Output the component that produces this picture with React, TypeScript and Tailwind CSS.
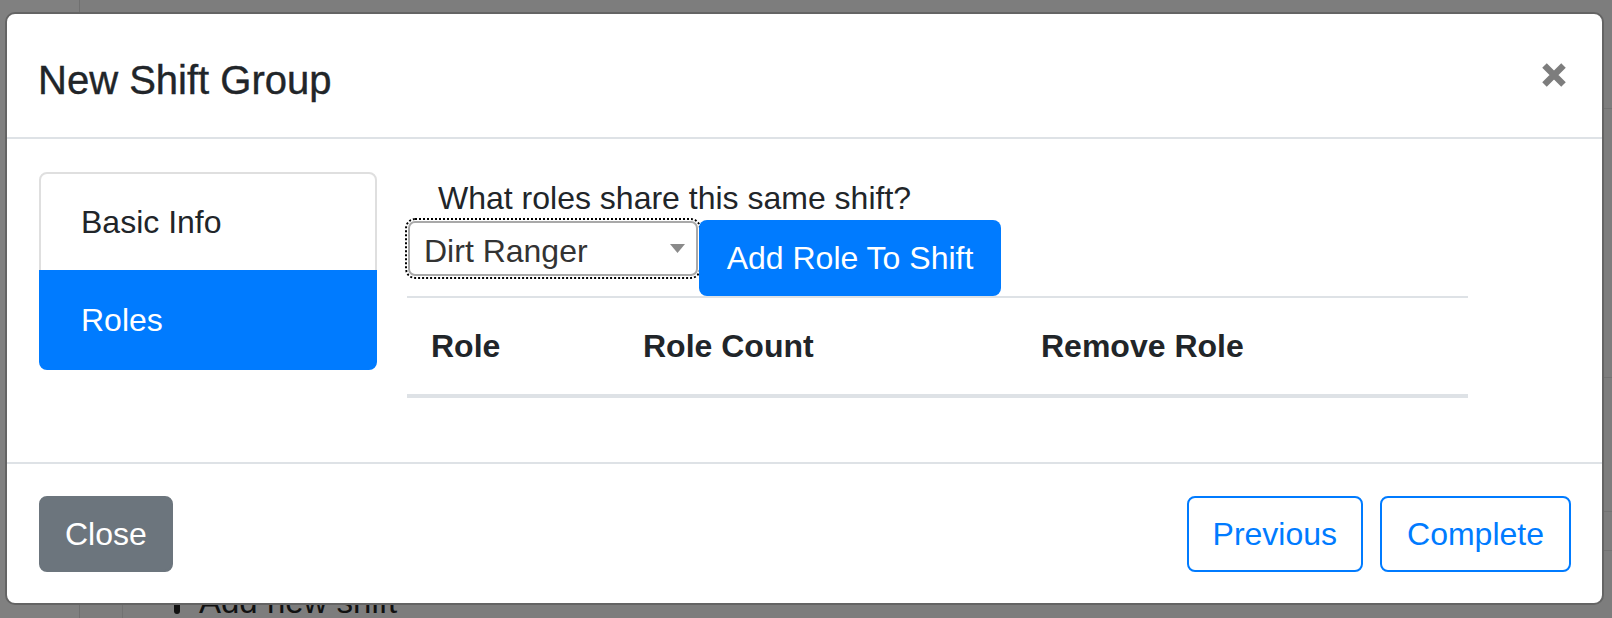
import React from "react";

function CloseX() {
  return (
    <svg width="26" height="26" viewBox="0 0 26 26" className="mt-[48px] shrink-0">
      <path d="M3.5 3.5 L22.5 22.5 M22.5 3.5 L3.5 22.5" stroke="#7d7d7d" strokeWidth="6.4" strokeLinecap="butt" fill="none" />
    </svg>
  );
}

function PlusIcon() {
  return (
    <svg width="24" height="26" viewBox="0 0 24 26" className="mt-[10px] shrink-0">
      <path d="M12 3 L12 23 M3 12 L21 12" stroke="#111" strokeWidth="6" strokeLinecap="round" fill="none" />
    </svg>
  );
}

export default function App() {
  return (
    <div className="relative w-[1612px] h-[618px] overflow-hidden bg-[#7d7d7d] text-[#212529] font-['Liberation_Sans',Arial,sans-serif]">
      {/* page behind the overlay */}
      <div className="flex h-full">
        <div className="w-[80px] h-full border-r border-[#707070] bg-[#808080]" />
        <div className="flex-1 flex flex-col">
          <div className="h-[109px] shrink-0 border-b border-[#727272]" />
          <div className="h-[269px] shrink-0 border-b border-[#727272]" />
          <div className="h-[134px] shrink-0 border-b border-[#727272]" />
          <div className="h-[39px] shrink-0 border-b border-[#727272]" />
          <div className="flex-1 flex">
            <div className="w-[43px] border-r border-[#727272]" />
            <div className="flex items-start gap-[10px] pl-[42px] pt-[27px]">
              <PlusIcon />
              <span className="text-[33px] leading-[48px] text-[#111] whitespace-nowrap">Add new shift</span>
            </div>
          </div>
        </div>
      </div>

      {/* modal */}
      <div className="absolute left-[5px] top-[12px] w-[1599px] border-2 border-[#646464] rounded-[10px] bg-white flex flex-col">
        {/* header */}
        <div className="h-[125px] border-b-2 border-[#dee2e6] flex justify-between items-start pl-[31px] pr-[35px]">
          <h5 className="mt-[36px] text-[40px] leading-[60px] font-normal [-webkit-text-stroke:0.4px_#212529]">New Shift Group</h5>
          <CloseX />
        </div>

        {/* body */}
        <div className="flex items-start pl-[32px] pt-[33px] pb-[32px]">
          <div className="w-[338px] flex flex-col text-[32px]">
            <div className="h-[100px] border-2 border-[#dfdfdf] rounded-t-[8px] flex items-center pl-[40px]">
              Basic Info
            </div>
            <div className="-mt-[2px] h-[100px] border-2 border-[#007bff] bg-[#007bff] rounded-b-[8px] flex items-center pl-[40px] text-white">
              Roles
            </div>
          </div>

          <div className="ml-[30px] w-[1061px] flex flex-col">
            <div className="h-[48px] leading-[52px] pl-[31px] text-[32px]">What roles share this same shift?</div>
            <div className="flex items-start gap-[1px]">
              <div className="ml-[1px] mt-[1px] w-[290px] h-[55px] border-2 border-[#a9a9a9] rounded-[7px] outline-2 outline-dotted outline-black outline-offset-[1px] flex items-center justify-between pl-[14px] pr-[11px]">
                <span className="pt-[5px] text-[32px] leading-[40px] text-[#333]">Dirt Ranger</span>
                <svg width="15" height="9" viewBox="0 0 15 9">
                  <path d="M0 0 L15 0 L7.5 9 Z" fill="#8a8a8a" />
                </svg>
              </div>
              <div className="w-[302px] h-[76px] bg-[#007bff] rounded-[8px] text-white text-[32px] flex items-center justify-center">
                Add Role To Shift
              </div>
            </div>
            <div className="mb-[32px] border-t-2 border-b-4 border-[#dee2e6] flex text-[32px] leading-[48px] font-bold py-[24px]">
              <div className="w-[212px] pl-[24px]">Role</div>
              <div className="w-[398px] pl-[24px]">Role Count</div>
              <div className="w-[451px] pl-[24px]">Remove Role</div>
            </div>
          </div>
        </div>

        {/* footer */}
        <div className="border-t-2 border-[#dee2e6] flex items-center pl-[32px] pr-[31px] pt-[32px] pb-[31px] text-[32px] leading-[48px]">
          <div className="px-[24px] py-[12px] border-2 border-[#6c757d] bg-[#6c757d] text-white rounded-[8px]">Close</div>
          <div className="ml-auto flex gap-[17px]">
            <div className="px-[24px] py-[12px] border-2 border-[#007bff] text-[#007bff] rounded-[8px]">Previous</div>
            <div className="px-[25px] py-[12px] border-2 border-[#007bff] text-[#007bff] rounded-[8px]">Complete</div>
          </div>
        </div>
      </div>
    </div>
  );
}
